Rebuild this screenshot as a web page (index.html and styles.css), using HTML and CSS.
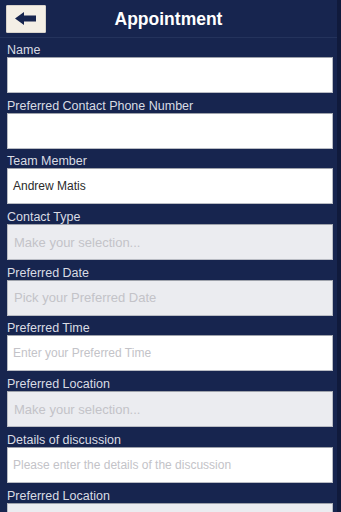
FILE: index.html
```html
<!DOCTYPE html>
<html>
<head>
<meta charset="utf-8">
<link rel="stylesheet" href="styles.css">
</head>
<body>
<div class="app">
  <header class="topbar">
    <button class="back" aria-label="Back">
      <svg width="22" height="13" viewBox="0 0 22 13"><path d="M0 6.5 L9 0 L9 3.5 L21 3.5 L21 9.5 L9 9.5 L9 13 Z" fill="#17254f"/></svg>
    </button>
    <h1 class="title">Appointment</h1>
  </header>
  <form class="form">
    <label class="group"><span class="lbl">Name</span><span class="field"></span></label>
    <label class="group"><span class="lbl">Preferred Contact Phone Number</span><span class="field"></span></label>
    <label class="group"><span class="lbl">Team Member</span><span class="field value">Andrew Matis</span></label>
    <label class="group"><span class="lbl">Contact Type</span><span class="field gray ph">Make your selection...</span></label>
    <label class="group"><span class="lbl">Preferred Date</span><span class="field gray ph">Pick your Preferred Date</span></label>
    <label class="group"><span class="lbl">Preferred Time</span><span class="field ph">Enter your Preferred Time</span></label>
    <label class="group"><span class="lbl">Preferred Location</span><span class="field gray ph">Make your selection...</span></label>
    <label class="group"><span class="lbl">Details of discussion</span><span class="field ph">Please enter the details of the discussion</span></label>
    <label class="group"><span class="lbl">Preferred Location</span><span class="field gray ph"></span></label>
  </form>
</div>
</body>
</html>
```

FILE: styles.css
```css
* { box-sizing: border-box; }
html, body { margin: 0; padding: 0; height: 100%; overflow: hidden; }
body {
  background: #17254f;
  font-family: "Liberation Sans", Arial, sans-serif;
}
.app {
  height: 512px;
  overflow: hidden;
  border-right: 4px solid #101a3c;
}
.topbar {
  height: 38px;
  border-bottom: 1px solid #24335c;
  display: flex;
  align-items: flex-start;
  padding: 5px 0 0 6px;
}
.back {
  width: 40px;
  height: 28px;
  background: #f4efe6;
  border: 1px solid #d8d3cb;
  border-radius: 1px;
  display: flex;
  align-items: center;
  justify-content: center;
  padding: 0 0 1px 0;
  margin: 0;
}
.title {
  flex: 1;
  margin: 0;
  padding-right: 46px;
  text-align: center;
  color: #ffffff;
  font-size: 17.5px;
  font-weight: bold;
  line-height: 28px;
}
.form {
  padding: 5px 4px 0 7px;
}
.group {
  display: flex;
  flex-direction: column;
  flex-shrink: 0;
}
.lbl {
  flex-shrink: 0;
  color: #d9dce4;
  font-size: 12.5px;
  line-height: 14px;
  height: 14px;
  white-space: nowrap;
}
.group + .group .lbl { margin-top: 5.7px; }
.field {
  flex-shrink: 0;
  height: 36px;
  background: #ffffff;
  border: 1px solid #b9bcc4;
  border-top-color: #9ea2ab;
  display: flex;
  align-items: center;
  padding-left: 5px;
  font-size: 12px;
  color: #c3c3c8;
}
.field.value { color: #2a2a2a; }
.field.gray { background: #ebecf0; padding-left: 6px; font-size: 13px; }
```
